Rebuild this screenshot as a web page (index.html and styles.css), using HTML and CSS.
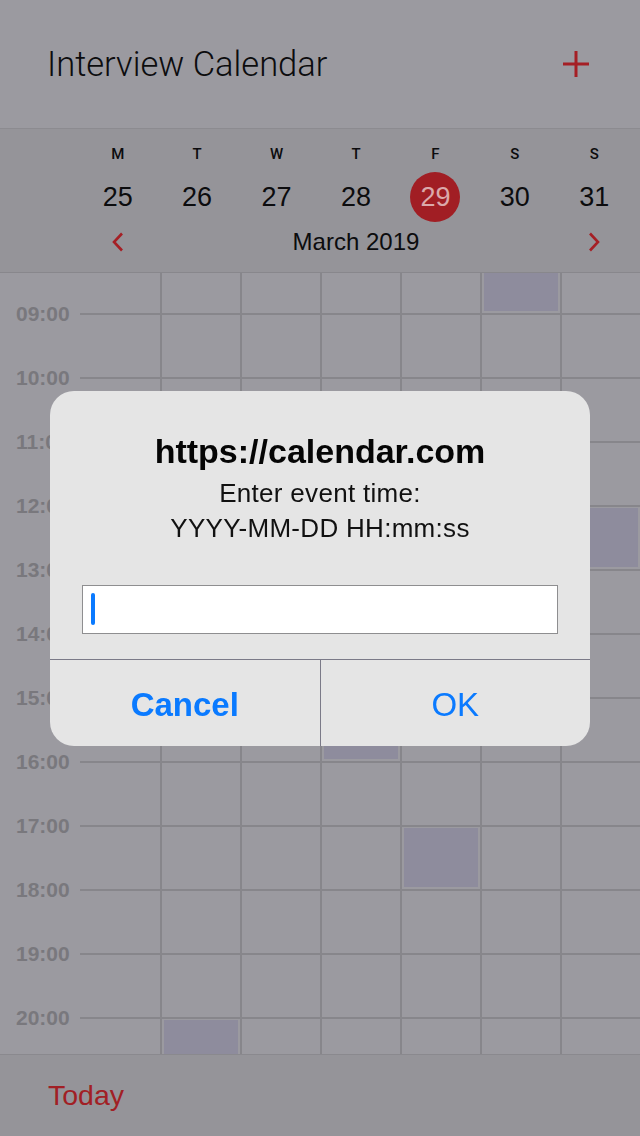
FILE: index.html
```html
<!DOCTYPE html>
<html lang="en">
<head>
<meta charset="utf-8">
<title>Interview Calendar</title>
<link rel="stylesheet" href="styles.css">
</head>
<body>
<div class="app">
  <header class="topbar">
    <h1 class="title">Interview Calendar</h1>
    <button class="add" aria-label="Add event">
      <svg width="26" height="26" viewBox="0 0 26 26"><path d="M13 0V26M0 13H26" stroke="#a51f25" stroke-width="3" fill="none"/></svg>
    </button>
  </header>

  <section class="week">
    <div class="days">
      <div class="day"><span class="letter">M</span><span class="num">25</span></div>
      <div class="day"><span class="letter">T</span><span class="num">26</span></div>
      <div class="day"><span class="letter">W</span><span class="num">27</span></div>
      <div class="day"><span class="letter">T</span><span class="num">28</span></div>
      <div class="day"><span class="letter">F</span><span class="num today">29</span></div>
      <div class="day"><span class="letter">S</span><span class="num">30</span></div>
      <div class="day"><span class="letter">S</span><span class="num">31</span></div>
    </div>
    <div class="month-row">
      <span class="chev"><svg width="14" height="20" viewBox="0 0 14 20"><path d="M11 1.5L3 10L11 18.5" stroke="#a51f25" stroke-width="2.6" fill="none"/></svg></span>
      <span class="month">March 2019</span>
      <span class="chev"><svg width="14" height="20" viewBox="0 0 14 20"><path d="M3 1.5L11 10L3 18.5" stroke="#a51f25" stroke-width="2.6" fill="none"/></svg></span>
    </div>
  </section>

  <main class="grid">
    <div class="row partial">
      <div class="time"></div>
      <div class="cells">
        <div class="cell"></div><div class="cell"></div><div class="cell"></div><div class="cell"></div><div class="cell"></div><div class="cell"><div class="event"></div></div><div class="cell"></div>
      </div>
    </div>
    <div class="row"><div class="time"><span>09:00</span></div><div class="cells"><div class="cell"></div><div class="cell"></div><div class="cell"></div><div class="cell"></div><div class="cell"></div><div class="cell"></div><div class="cell"></div></div></div>
    <div class="row"><div class="time"><span>10:00</span></div><div class="cells"><div class="cell"></div><div class="cell"></div><div class="cell"></div><div class="cell"></div><div class="cell"></div><div class="cell"></div><div class="cell"></div></div></div>
    <div class="row"><div class="time"><span>11:00</span></div><div class="cells"><div class="cell"></div><div class="cell"></div><div class="cell"></div><div class="cell"></div><div class="cell"></div><div class="cell"></div><div class="cell"></div></div></div>
    <div class="row"><div class="time"><span>12:00</span></div><div class="cells"><div class="cell"></div><div class="cell"></div><div class="cell"></div><div class="cell"></div><div class="cell"></div><div class="cell"></div><div class="cell"><div class="event"></div></div></div></div>
    <div class="row"><div class="time"><span>13:00</span></div><div class="cells"><div class="cell"></div><div class="cell"></div><div class="cell"></div><div class="cell"></div><div class="cell"></div><div class="cell"></div><div class="cell"></div></div></div>
    <div class="row"><div class="time"><span>14:00</span></div><div class="cells"><div class="cell"></div><div class="cell"></div><div class="cell"></div><div class="cell"></div><div class="cell"></div><div class="cell"></div><div class="cell"></div></div></div>
    <div class="row"><div class="time"><span>15:00</span></div><div class="cells"><div class="cell"></div><div class="cell"></div><div class="cell"></div><div class="cell"><div class="event"></div></div><div class="cell"></div><div class="cell"></div><div class="cell"></div></div></div>
    <div class="row"><div class="time"><span>16:00</span></div><div class="cells"><div class="cell"></div><div class="cell"></div><div class="cell"></div><div class="cell"></div><div class="cell"></div><div class="cell"></div><div class="cell"></div></div></div>
    <div class="row"><div class="time"><span>17:00</span></div><div class="cells"><div class="cell"></div><div class="cell"></div><div class="cell"></div><div class="cell"></div><div class="cell"><div class="event"></div></div><div class="cell"></div><div class="cell"></div></div></div>
    <div class="row"><div class="time"><span>18:00</span></div><div class="cells"><div class="cell"></div><div class="cell"></div><div class="cell"></div><div class="cell"></div><div class="cell"></div><div class="cell"></div><div class="cell"></div></div></div>
    <div class="row"><div class="time"><span>19:00</span></div><div class="cells"><div class="cell"></div><div class="cell"></div><div class="cell"></div><div class="cell"></div><div class="cell"></div><div class="cell"></div><div class="cell"></div></div></div>
    <div class="row"><div class="time"><span>20:00</span></div><div class="cells"><div class="cell"></div><div class="cell"><div class="event"></div></div><div class="cell"></div><div class="cell"></div><div class="cell"></div><div class="cell"></div><div class="cell"></div></div></div>
  </main>

  <footer class="bottombar">
    <span class="today-link">Today</span>
  </footer>
</div>

<div class="backdrop">
  <div class="dialog" role="dialog">
    <div class="dialog-body">
      <h2 class="dialog-title">https://calendar.com</h2>
      <p class="dialog-msg">Enter event time:<br>YYYY-MM-DD HH:mm:ss</p>
      <div class="field"><span class="caret"></span></div>
    </div>
    <div class="actions">
      <span class="btn btn-cancel">Cancel</span>
      <span class="btn btn-ok">OK</span>
    </div>
  </div>
</div>
</body>
</html>
```

FILE: styles.css
```css
* { box-sizing: border-box; }
html, body { margin: 0; padding: 0; }
body {
  width: 640px;
  height: 1136px;
  overflow: hidden;
  font-family: "Liberation Sans", Arial, sans-serif;
  background: #9b9aa0;
  color: #000;
}
.app {
  height: 1136px;
  display: flex;
  flex-direction: column;
}

/* top bar */
.topbar {
  height: 129px;
  flex: none;
  display: flex;
  align-items: center;
  justify-content: space-between;
  padding: 0 51px 0 47px;
  background: #9b9aa0;
  border-bottom: 1px solid #8c8b90;
}
.title {
  margin: 0;
  font-family: Roboto, "Liberation Sans", sans-serif;
  font-weight: 300;
  font-size: 34.5px;
  line-height: 42px;
  color: #0c0c0e;
}
.add {
  border: 0;
  background: none;
  padding: 0;
  width: 26px;
  height: 26px;
  display: block;
}
.add svg { display: block; }

/* week header */
.week {
  flex: none;
  height: 144px;
  padding: 15px 6px 0 78px;
  background: #959499;
  border-bottom: 1px solid #88878c;
}
.days {
  display: grid;
  grid-template-columns: repeat(7, 1fr);
}
.day {
  display: flex;
  flex-direction: column;
  align-items: center;
  gap: 8px;
}
.letter {
  font-family: Roboto, "Liberation Sans", sans-serif;
  font-weight: 500;
  font-size: 15px;
  line-height: 20px;
  color: #0c0c0e;
}
.num {
  width: 50px;
  height: 50px;
  border-radius: 50%;
  display: flex;
  align-items: center;
  justify-content: center;
  font-size: 27px;
  color: #0c0c0e;
}
.num.today {
  background: #a11e24;
  color: #dba9ab;
}
.month-row {
  margin-top: 5px;
  height: 30px;
  display: grid;
  grid-template-columns: 1fr 5fr 1fr;
  align-items: center;
}
.chev {
  display: flex;
  justify-content: center;
}
.chev svg { display: block; }
.month {
  text-align: center;
  font-size: 24px;
  line-height: 30px;
  color: #0c0c0e;
}

/* time grid */
.grid {
  flex: 1;
  overflow: hidden;
  background: #9b9aa0;
}
.row {
  display: flex;
  height: 64px;
}
.row.partial { height: 40px; }
.time {
  width: 80px;
  flex: none;
  padding-left: 16px;
}
.time span {
  display: block;
  margin-top: -9px;
  font-weight: bold;
  font-size: 21px;
  line-height: 20px;
  color: #79787d;
}
.cells {
  flex: 1;
  display: grid;
  grid-template-columns: repeat(7, 1fr);
  border-top: 2px solid #87868b;
}
.partial .cells { border-top: 0; }
.cell {
  padding: 1px 2px 2px 2px;
  display: flex;
}
.partial .cell { padding-top: 0; }
.cell + .cell { border-left: 2px solid #87868b; }
.event {
  flex: 1;
  background: #8e8c9d;
}

/* bottom bar */
.bottombar {
  flex: none;
  height: 82px;
  display: flex;
  align-items: center;
  padding-left: 48px;
  background: #959499;
  border-top: 1px solid #8a898e;
}
.today-link {
  font-size: 28.5px;
  color: #a11f25;
}

/* alert dialog */
.backdrop {
  position: fixed;
  inset: 0;
  display: flex;
  align-items: center;
  justify-content: center;
}
.dialog {
  width: 540px;
  background: #e5e5e5;
  border-radius: 24px;
  overflow: hidden;
}
.dialog-body {
  padding: 40px 32px 25px;
  text-align: center;
}
.dialog-title {
  margin: 0;
  font-size: 34px;
  line-height: 40px;
  font-weight: bold;
  color: #050505;
}
.dialog-msg {
  margin: 5px 0 0;
  font-size: 26px;
  line-height: 35px;
  letter-spacing: 0.3px;
  color: #111;
}
.field {
  margin-top: 39px;
  height: 49px;
  border: 1px solid #8e8e90;
  background: #fff;
  padding: 7px 8px;
  text-align: left;
}
.caret {
  display: block;
  width: 4px;
  height: 32px;
  border-radius: 2px;
  background: #0a7aff;
}
.actions {
  display: flex;
  height: 87px;
  border-top: 1px solid #7b7a88;
}
.btn {
  flex: 1;
  display: flex;
  align-items: center;
  justify-content: center;
  padding-top: 5px;
  font-size: 33px;
  color: #0a7aff;
}
.btn + .btn { border-left: 1px solid #7b7a88; }
.btn-cancel { font-weight: bold; }
```
